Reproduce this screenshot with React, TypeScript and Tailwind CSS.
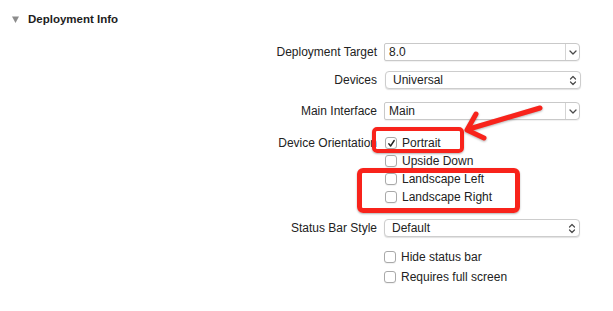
import React from "react";

const font = { fontFamily: '"Liberation Sans", Arial, sans-serif' };

function ChevronDown() {
  return (
    <svg width="8" height="5" viewBox="0 0 8 5" fill="none">
      <path d="M1 1l3 3 3-3" stroke="#4a4a4a" strokeWidth="1.3" strokeLinecap="round" strokeLinejoin="round" />
    </svg>
  );
}

function ChevronUpDown() {
  return (
    <svg width="8" height="11" viewBox="0 0 8 11" fill="none">
      <path d="M1.5 4l2.5-2.5 2.5 2.5M1.5 7l2.5 2.5 2.5-2.5" stroke="#4a4a4a" strokeWidth="1.2" strokeLinecap="round" strokeLinejoin="round" />
    </svg>
  );
}

// combo box: text field + little arrow segment
function Combo({ value }: { value: string }) {
  return (
    <div className="flex h-[18px] w-[196px] border border-[#c9c9c9] rounded-r-[4px] rounded-l-[2px] bg-white shadow-[0_1px_1px_rgba(0,0,0,0.06)]">
      <div className="flex-1 flex items-center pl-[4px] text-[12px] text-[#222]">{value}</div>
      <div className="w-[14px] border-l border-[#d4d4d4] flex items-center justify-center">
        <ChevronDown />
      </div>
    </div>
  );
}

// popup button
function Popup({ value }: { value: string }) {
  return (
    <div className="flex items-center h-[18px] w-[196px] border border-[#cdcdcd] rounded-[4px] bg-white shadow-[0_1px_1px_rgba(0,0,0,0.12)]">
      <div className="flex-1 pl-[7px] text-[12px] text-[#222]">{value}</div>
      <div className="w-[14px] flex items-center justify-center">
        <ChevronUpDown />
      </div>
    </div>
  );
}

function Check({ label, checked }: { label: string; checked?: boolean }) {
  return (
    <div className="flex items-center h-[18px] gap-[5px]">
      <div className="w-[12px] h-[12px] rounded-[3px] border border-[#a9a9a9] bg-white flex items-center justify-center shadow-[0_1px_1px_rgba(0,0,0,0.06)]">
        {checked && (
          <svg width="9" height="9" viewBox="0 0 9 9" fill="none">
            <path d="M1.8 4.8l1.8 2.2L7.2 1.5" stroke="#222" strokeWidth="1.4" strokeLinecap="round" strokeLinejoin="round" />
          </svg>
        )}
      </div>
      <span className="text-[12px] text-[#222]">{label}</span>
    </div>
  );
}

function Row({ label, children, className }: { label?: string; children: React.ReactNode; className?: string }) {
  return (
    <div className={"flex items-start " + (className || "")}>
      <div className="w-[377px] h-[18px] flex items-center justify-end text-[12px] text-[#222] whitespace-nowrap">
        {label}
      </div>
      <div className="ml-[7px]">{children}</div>
    </div>
  );
}

export default function App() {
  return (
    <div className="relative w-[613px] h-[311px] bg-white overflow-hidden" style={font}>
      {/* section header */}
      <div className="flex items-center pl-[12px] pt-[11px] gap-[9px]">
        <svg width="7" height="7" viewBox="0 0 7 7">
          <path d="M0 0.5h7L3.5 7z" fill="#8c8c8c" />
        </svg>
        <span className="text-[11.5px] font-bold text-[#1d1d1d]">Deployment Info</span>
      </div>

      {/* form */}
      <div className="flex flex-col mt-[15px]">
        <Row label="Deployment Target">
          <Combo value="8.0" />
        </Row>
        <Row label="Devices" className="mt-[10px]">
          <div className="ml-[1px]">
            <Popup value="Universal" />
          </div>
        </Row>
        <Row label="Main Interface" className="mt-[13px]">
          <Combo value="Main" />
        </Row>
        <Row label="Device Orientation" className="mt-[14px]">
          <div className="flex flex-col ml-[1px]">
            <Check label="Portrait" checked />
            <Check label="Upside Down" />
            <Check label="Landscape Left" />
            <Check label="Landscape Right" />
          </div>
        </Row>
        <Row label="Status Bar Style" className="mt-[13px]">
          <Popup value="Default" />
        </Row>
        <Row className="mt-[11px]">
          <div className="flex flex-col gap-[2px]">
            <Check label="Hide status bar" />
            <Check label="Requires full screen" />
          </div>
        </Row>
      </div>

      {/* red annotations */}
      <div className="absolute left-[372px] top-[127px] w-[92px] h-[26px] border-[4px] border-[#f8231b] rounded-[5px] shadow-[0_1px_2px_rgba(0,0,0,0.3)]" />
      <div className="absolute left-[357px] top-[168px] w-[163px] h-[45px] border-[5px] border-[#f8231b] rounded-[6px] shadow-[0_1px_2px_rgba(0,0,0,0.3)]" />
      <svg className="absolute left-0 top-0" width="613" height="311" viewBox="0 0 613 311" fill="none">
        <g stroke="#f8231b" strokeWidth="5" strokeLinecap="round" strokeLinejoin="round" style={{ filter: "drop-shadow(0 1px 1px rgba(0,0,0,0.3))" }}>
          <path d="M540 108L469 129" />
          <path d="M476 114L467 130L484 138" />
        </g>
      </svg>
    </div>
  );
}
